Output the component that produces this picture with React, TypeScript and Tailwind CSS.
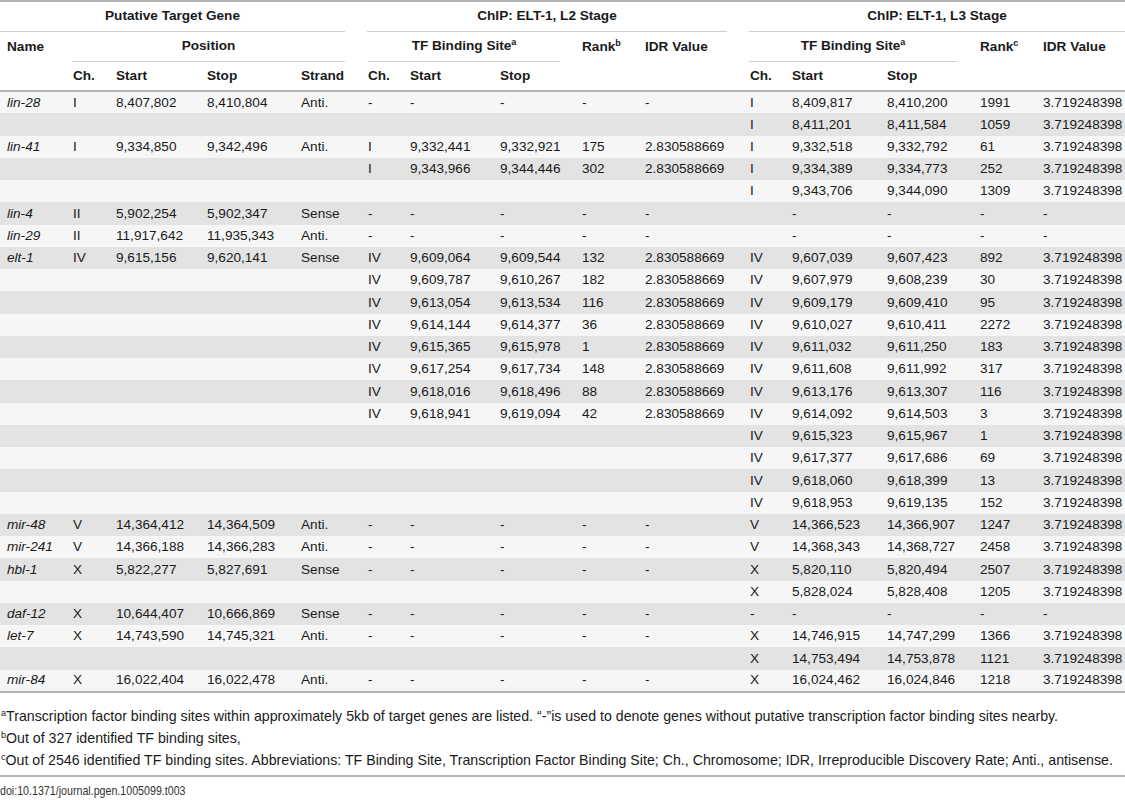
import React from "react";

const rows: string[][] = [
  ["lin-28", "I", "8,407,802", "8,410,804", "Anti.", "-", "-", "-", "-", "-", "I", "8,409,817", "8,410,200", "1991", "3.719248398"],
  ["", "", "", "", "", "", "", "", "", "", "I", "8,411,201", "8,411,584", "1059", "3.719248398"],
  ["lin-41", "I", "9,334,850", "9,342,496", "Anti.", "I", "9,332,441", "9,332,921", "175", "2.830588669", "I", "9,332,518", "9,332,792", "61", "3.719248398"],
  ["", "", "", "", "", "I", "9,343,966", "9,344,446", "302", "2.830588669", "I", "9,334,389", "9,334,773", "252", "3.719248398"],
  ["", "", "", "", "", "", "", "", "", "", "I", "9,343,706", "9,344,090", "1309", "3.719248398"],
  ["lin-4", "II", "5,902,254", "5,902,347", "Sense", "-", "-", "-", "-", "-", "", "-", "-", "-", "-"],
  ["lin-29", "II", "11,917,642", "11,935,343", "Anti.", "-", "-", "-", "-", "-", "", "-", "-", "-", "-"],
  ["elt-1", "IV", "9,615,156", "9,620,141", "Sense", "IV", "9,609,064", "9,609,544", "132", "2.830588669", "IV", "9,607,039", "9,607,423", "892", "3.719248398"],
  ["", "", "", "", "", "IV", "9,609,787", "9,610,267", "182", "2.830588669", "IV", "9,607,979", "9,608,239", "30", "3.719248398"],
  ["", "", "", "", "", "IV", "9,613,054", "9,613,534", "116", "2.830588669", "IV", "9,609,179", "9,609,410", "95", "3.719248398"],
  ["", "", "", "", "", "IV", "9,614,144", "9,614,377", "36", "2.830588669", "IV", "9,610,027", "9,610,411", "2272", "3.719248398"],
  ["", "", "", "", "", "IV", "9,615,365", "9,615,978", "1", "2.830588669", "IV", "9,611,032", "9,611,250", "183", "3.719248398"],
  ["", "", "", "", "", "IV", "9,617,254", "9,617,734", "148", "2.830588669", "IV", "9,611,608", "9,611,992", "317", "3.719248398"],
  ["", "", "", "", "", "IV", "9,618,016", "9,618,496", "88", "2.830588669", "IV", "9,613,176", "9,613,307", "116", "3.719248398"],
  ["", "", "", "", "", "IV", "9,618,941", "9,619,094", "42", "2.830588669", "IV", "9,614,092", "9,614,503", "3", "3.719248398"],
  ["", "", "", "", "", "", "", "", "", "", "IV", "9,615,323", "9,615,967", "1", "3.719248398"],
  ["", "", "", "", "", "", "", "", "", "", "IV", "9,617,377", "9,617,686", "69", "3.719248398"],
  ["", "", "", "", "", "", "", "", "", "", "IV", "9,618,060", "9,618,399", "13", "3.719248398"],
  ["", "", "", "", "", "", "", "", "", "", "IV", "9,618,953", "9,619,135", "152", "3.719248398"],
  ["mir-48", "V", "14,364,412", "14,364,509", "Anti.", "-", "-", "-", "-", "-", "V", "14,366,523", "14,366,907", "1247", "3.719248398"],
  ["mir-241", "V", "14,366,188", "14,366,283", "Anti.", "-", "-", "-", "-", "-", "V", "14,368,343", "14,368,727", "2458", "3.719248398"],
  ["hbl-1", "X", "5,822,277", "5,827,691", "Sense", "-", "-", "-", "-", "-", "X", "5,820,110", "5,820,494", "2507", "3.719248398"],
  ["", "", "", "", "", "", "", "", "", "", "X", "5,828,024", "5,828,408", "1205", "3.719248398"],
  ["daf-12", "X", "10,644,407", "10,666,869", "Sense", "-", "-", "-", "-", "-", "-", "-", "-", "-", "-"],
  ["let-7", "X", "14,743,590", "14,745,321", "Anti.", "-", "-", "-", "-", "-", "X", "14,746,915", "14,747,299", "1366", "3.719248398"],
  ["", "", "", "", "", "", "", "", "", "", "X", "14,753,494", "14,753,878", "1121", "3.719248398"],
  ["mir-84", "X", "16,022,404", "16,022,478", "Anti.", "-", "-", "-", "-", "-", "X", "16,024,462", "16,024,846", "1218", "3.719248398"],
];

function Sup({ children, bold }: { children: React.ReactNode; bold?: boolean }) {
  return (
    <span className={`relative -top-[5px] text-[9px] leading-none ${bold ? "font-bold" : "font-normal"}`}>
      {children}
    </span>
  );
}

export default function App() {
  return (
    <div className="w-[1125px] bg-white text-[#1a1a1a] font-['Liberation_Sans',Arial,sans-serif] text-[13.6px]">
      <div className="border-t-2 border-[#b4b4b4]">
        <table className="w-[1125px] table-fixed border-collapse">
          <colgroup>
            <col className="w-[73px]" />
            <col className="w-[43px]" />
            <col className="w-[91px]" />
            <col className="w-[94px]" />
            <col className="w-[67px]" />
            <col className="w-[42px]" />
            <col className="w-[90px]" />
            <col className="w-[82px]" />
            <col className="w-[63px]" />
            <col className="w-[105px]" />
            <col className="w-[42px]" />
            <col className="w-[95px]" />
            <col className="w-[93px]" />
            <col className="w-[63px]" />
            <col className="w-[82px]" />
          </colgroup>
          <thead className="font-bold">
            <tr>
              <th colSpan={5} className="p-0 font-bold">
                <div className="h-[30px] flex items-center justify-center border-b border-[#cfcfcf] mr-[23px]">Putative Target Gene</div>
              </th>
              <th colSpan={5} className="p-0 font-bold">
                <div className="h-[30px] flex items-center justify-center border-b border-[#cfcfcf] mr-[23px] -ml-px">ChIP: ELT-1, L2 Stage</div>
              </th>
              <th colSpan={5} className="p-0 font-bold">
                <div className="h-[30px] flex items-center justify-center border-b border-[#cfcfcf] -ml-px">ChIP: ELT-1, L3 Stage</div>
              </th>
            </tr>
            <tr>
              <th className="p-0 pl-[7px] text-left font-bold">
                <div className="h-[30px] flex items-center">Name</div>
              </th>
              <th colSpan={4} className="p-0 font-bold">
                <div className="h-[30px] flex items-center justify-center border-b border-[#cfcfcf] mr-[23px] -ml-px">Position</div>
              </th>
              <th colSpan={3} className="p-0 font-bold">
                <div className="h-[30px] flex items-center justify-center border-b border-[#cfcfcf] mr-[22px]">
                  <span>TF Binding Site<Sup bold>a</Sup></span>
                </div>
              </th>
              <th className="p-0 text-left font-bold">
                <div className="h-[30px] flex items-center">
                  <span>Rank<Sup bold>b</Sup></span>
                </div>
              </th>
              <th className="p-0 text-left font-bold">
                <div className="h-[30px] flex items-center">IDR Value</div>
              </th>
              <th colSpan={3} className="p-0 font-bold">
                <div className="h-[30px] flex items-center justify-center border-b border-[#cfcfcf] mr-[23px] -ml-px">
                  <span>TF Binding Site<Sup bold>a</Sup></span>
                </div>
              </th>
              <th className="p-0 text-left font-bold">
                <div className="h-[30px] flex items-center">
                  <span>Rank<Sup bold>c</Sup></span>
                </div>
              </th>
              <th className="p-0 text-left font-bold">
                <div className="h-[30px] flex items-center">IDR Value</div>
              </th>
            </tr>
            <tr className="border-b-2 border-[#b4b4b4]">
              {["", "Ch.", "Start", "Stop", "Strand", "Ch.", "Start", "Stop", "", "", "Ch.", "Start", "Stop", "", ""].map((h, i) => (
                <th key={i} className={`p-0 text-left font-bold h-[29px] ${i === 0 ? "pl-[7px]" : ""}`}>
                  {h}
                </th>
              ))}
            </tr>
          </thead>
          <tbody className="border-b-2 border-[#b4b4b4]">
            {rows.map((r, ri) => (
              <tr key={ri} className={ri % 2 === 0 ? "bg-[#f6f6f6]" : "bg-[#e3e3e3]"}>
                {r.map((c, ci) => (
                  <td
                    key={ci}
                    className={`p-0 h-[22.25px] whitespace-nowrap text-left leading-none ${ci === 0 ? "pl-[7px] italic" : ""}`}
                  >
                    {c}
                  </td>
                ))}
              </tr>
            ))}
          </tbody>
        </table>
      </div>
      <div className="pt-[12px] pb-[4px] pl-[1px] leading-[22px] text-[14.2px]">
        <div>
          <Sup>a</Sup>
          Transcription factor binding sites within approximately 5kb of target genes are listed. “-”is used to denote genes without putative transcription factor binding sites nearby.
        </div>
        <div>
          <Sup>b</Sup>
          Out of 327 identified TF binding sites,
        </div>
        <div>
          <Sup>c</Sup>
          Out of 2546 identified TF binding sites. Abbreviations: TF Binding Site, Transcription Factor Binding Site; Ch., Chromosome; IDR, Irreproducible Discovery Rate; Anti., antisense.
        </div>
      </div>
      <div className="border-t-2 border-[#b4b4b4] h-[27px] flex items-center pt-[2px] text-[13px] text-[#333]">
        <span className="inline-block origin-left scale-x-[0.82]">doi:10.1371/journal.pgen.1005099.t003</span>
      </div>
    </div>
  );
}
